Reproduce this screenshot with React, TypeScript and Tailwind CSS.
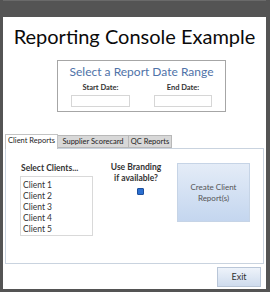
import React from "react";

const CLIENTS = ["Client 1", "Client 2", "Client 3", "Client 4", "Client 5"];

export default function App() {
  return (
    <div className="flex h-[292px] w-[270px] flex-col overflow-hidden whitespace-nowrap bg-[#545454] pb-[3px] pl-[3px] pr-[4px] font-['Lato',sans-serif]">
      <div className="h-[17px] shrink-0 border-t border-[#6a6a6a]" />
      <div className="flex min-h-0 flex-1 flex-col bg-white">
        <h1 className="mt-[6px] text-center text-[20px] leading-[26px] text-[#0a0a0a]">
          Reporting Console Example
        </h1>

        {/* date range */}
        <div className="ml-[54px] mt-[11px] h-[52px] w-[169px] shrink-0 border border-[#a6a6a6] bg-white">
          <p className="mt-[3px] text-center text-[12px] leading-[16px] text-[#4f72a8]">
            Select a Report Date Range
          </p>
          <div className="mt-[3px] flex justify-between px-[13px]">
            <div className="flex flex-col items-center">
              <span className="text-[7.5px] font-bold leading-[10px] text-[#333]">Start Date:</span>
              <div className="mt-[2px] h-[12px] w-[59px] border border-[#d6d6d6]" />
            </div>
            <div className="flex flex-col items-center">
              <span className="text-[7.5px] font-bold leading-[10px] text-[#333]">End Date:</span>
              <div className="mt-[2px] h-[12px] w-[58px] border border-[#d6d6d6]" />
            </div>
          </div>
        </div>

        {/* tabs */}
        <div className="ml-[2px] mt-[22px] flex h-[14px] shrink-0 text-[7.5px] leading-[12px] text-[#222]">
          <div className="relative z-10 -mb-px w-[53px] border border-b-0 border-[#c3c3c3] bg-white text-center">
            Client Reports
          </div>
          <div className="mt-[1px] w-[71px] border border-l-0 border-[#b8b8b8] bg-[#d8d8d8] text-center">
            Supplier Scorecard
          </div>
          <div className="mt-[1px] w-[43px] border border-l-0 border-[#b8b8b8] bg-[#d8d8d8] text-center">
            QC Reports
          </div>
        </div>
        <div className="ml-[2px] mr-[2px] flex h-[116px] shrink-0 border border-[#c9d3df] bg-white">
          <div className="ml-[14px] mt-[14px] flex flex-col">
            <span className="ml-[1px] text-[8.5px] font-bold leading-[11px] text-[#333]">Select Clients...</span>
            <div className="mt-[2px] h-[60px] w-[73px] border border-[#d9d9d9] pl-[2px] pt-[3px]">
              {CLIENTS.map((c) => (
                <div key={c} className="text-[8.5px] leading-[11px] text-[#333]">
                  {c}
                </div>
              ))}
            </div>
          </div>
          <div className="ml-[14px] mt-[13px] flex w-[58px] flex-col items-center">
            <span className="text-[8.5px] font-bold leading-[11px] text-[#333]">Use Branding</span>
            <span className="text-[8.5px] font-bold leading-[11px] text-[#333]">if available?</span>
            <div className="ml-[8px] mt-[4px] h-[7px] w-[7px] rounded-[1px] border border-[#1d4f9c] bg-[#2b6fd0]" />
          </div>
          <button className="ml-[12px] mt-[14px] flex h-[59px] w-[73px] flex-col items-center justify-center border border-[#c6d4e6] bg-gradient-to-b from-[#e4ecf7] to-[#c4d6ef] text-[8px] leading-[11px] text-[#555]">
            <span>Create Client</span>
            <span>Report(s)</span>
          </button>
        </div>

        <div className="mt-[3px] flex justify-end pr-[5px]">
          <button className="h-[20px] w-[44px] border border-[#b9c6d8] bg-gradient-to-b from-[#eef3fa] to-[#cfdcee] text-[9px] text-[#333]">
            Exit
          </button>
        </div>
      </div>
    </div>
  );
}
